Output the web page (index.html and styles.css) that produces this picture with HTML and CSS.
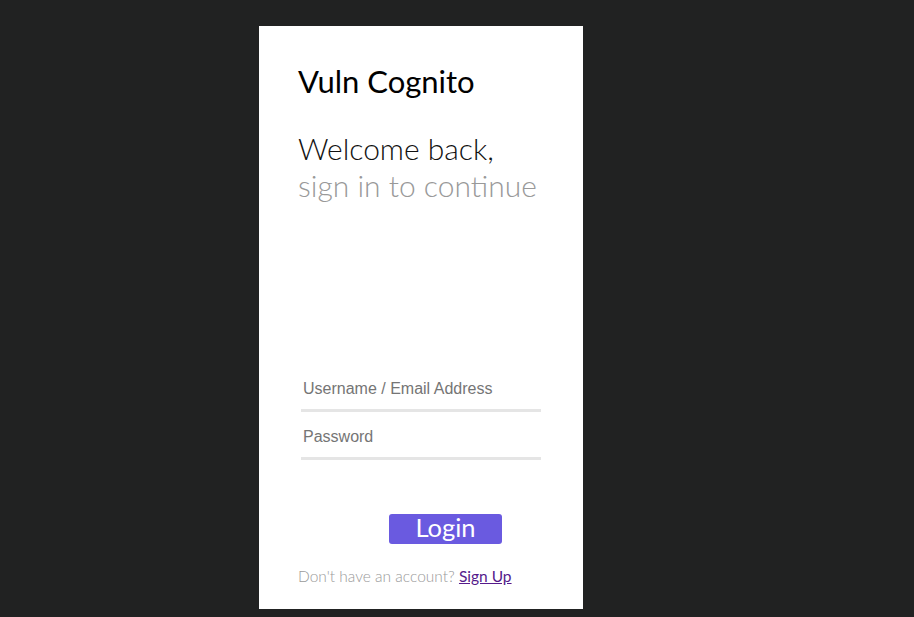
FILE: index.html
```html
<!DOCTYPE html>
<html>
<head>
<meta charset="utf-8">
<title>Vuln Cognito</title>
<link rel="stylesheet" href="styles.css">
</head>
<body>
<div class="card">
  <h1 class="brand">Vuln Cognito</h1>
  <h2 class="welcome">Welcome back,<br><span class="sub">sign in to continue</span></h2>
  <form class="form">
    <input class="field" type="text" placeholder="Username / Email Address">
    <input class="field" type="password" placeholder="Password">
    <button class="login" type="button">Login</button>
  </form>
  <p class="footer">Don't have an account? <a class="signup" href="#">Sign Up</a></p>
</div>
</body>
</html>
```
FILE: styles.css
```css
html, body {
  margin: 0;
  padding: 0;
  background: #212222;
  height: 100%;
}
body {
  padding-top: 26px;
  box-sizing: border-box;
  font-family: Lato, "Liberation Sans", sans-serif;
}
.card {
  width: 324px;
  height: 583px;
  margin-left: 259px;
  background: #ffffff;
  padding: 37px 0 0 39px;
  box-sizing: border-box;
  display: flex;
  flex-direction: column;
}
.brand {
  margin: 0;
  font-size: 31px;
  line-height: 36px;
  font-weight: 400;
  color: #000;
}
.welcome {
  margin: 31px 0 0 0;
  font-size: 30px;
  line-height: 37px;
  font-weight: 300;
  color: #111;
}
.sub {
  color: #999;
}
.form {
  margin: 165px 0 0 3px;
  display: flex;
  flex-direction: column;
  gap: 5px;
}
.field {
  width: 240px;
  height: 43px;
  box-sizing: border-box;
  border: none;
  border-bottom: 3px solid #e5e5e5;
  padding: 0 2px;
  margin: 0;
  font-family: "Liberation Sans", Arial, sans-serif;
  font-size: 16px;
  color: #333;
  outline: none;
  background: transparent;
}
.field::placeholder {
  color: #757575;
}
.login {
  margin: 49px 0 0 88px;
  width: 113px;
  height: 30px;
  box-sizing: border-box;
  background: #6a5ae0;
  border: none;
  border-radius: 3px;
  color: #fff;
  font-family: Lato, sans-serif;
  font-size: 25.5px;
  line-height: 26px;
  padding: 0 0 4px 0;
}
.footer {
  margin: 22px 0 0 0;
  font-size: 15.5px;
  line-height: 20px;
  font-weight: 300;
  color: #9a9a9a;
}
.signup {
  color: #551a8b;
  font-weight: 400;
  text-decoration: underline;
}
```
